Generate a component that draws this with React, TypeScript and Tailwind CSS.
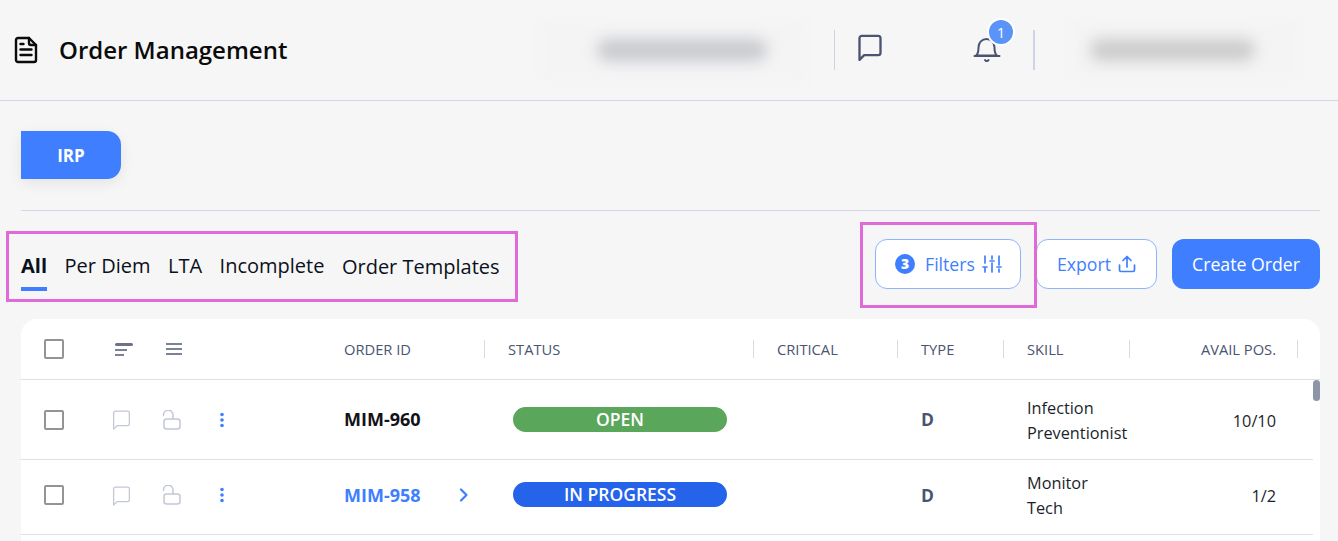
const gridCols = 'grid grid-cols-[464px_269px_144px_106px_126px_168px_22px]';

function DocIcon() {
  return (
    <svg width="24" height="28" viewBox="0 0 24 28" fill="none" stroke="#0b0b0b" strokeWidth="2.4" strokeLinejoin="round" strokeLinecap="round">
      <path d="M4 2h11L22 9v15a2 2 0 0 1-2 2H4a2 2 0 0 1-2-2V4a2 2 0 0 1 2-2Z" />
      <path d="M15 2v5a2 2 0 0 0 2 2h5" />
      <path d="M6.500 8h3M6.500 13.500h11M6.500 19h11" />
    </svg>
  );
}

function ChatIcon({ size, color, width }: { size: number; color: string; width: number }) {
  return (
    <svg width={size} height={size} viewBox="0 0 24 24" fill="none" stroke={color} strokeWidth={width} strokeLinejoin="round" strokeLinecap="round">
      <path d="M3 4.500A2 2 0 0 1 5 2.500h14a2 2 0 0 1 2 2V17a2 2 0 0 1-2 2H7l-4 4V4.500Z" />
    </svg>
  );
}

function BellIcon() {
  return (
    <svg width="28" height="30" viewBox="0 0 28 30" fill="none" stroke="#4a5472" strokeWidth="2" strokeLinecap="round" strokeLinejoin="round">
      <path d="M3 22.500c2-1.500 2.500-4 2.500-8 0-5 3.500-8.500 8-8.500s8 3.500 8 8.500c0 4 .5 6.500 2.500 8Z" />
      <path d="M1.500 23h25" />
      <path d="M12 27a2 2 0 0 0 3.500 0" />
    </svg>
  );
}

function SliderIcon() {
  return (
    <svg width="20" height="20" viewBox="0 0 20 20" fill="none" stroke="#3f7fff" strokeWidth="1.700" strokeLinecap="round">
      <path d="M3 2v7M3 13v5M10 2v3M10 9v9M17 2v9M17 15v3M1 13h4M8 7h4M15 13h4" />
    </svg>
  );
}

function UploadIcon() {
  return (
    <svg width="18" height="18" viewBox="0 0 18 18" fill="none" stroke="#3f7fff" strokeWidth="1.700" strokeLinecap="round" strokeLinejoin="round">
      <path d="M1.500 10v5a1.500 1.500 0 0 0 1.500 1.500h12a1.500 1.500 0 0 0 1.500-1.500v-5" />
      <path d="M9 12V1.500M5 5.500l4-4 4 4" />
    </svg>
  );
}

function LockIcon() {
  return (
    <svg width="20" height="20" viewBox="0 0 20 20" fill="none" stroke="#c3c8d6" strokeWidth="1.500" strokeLinecap="round" strokeLinejoin="round">
      <rect x="3" y="9" width="16" height="10" rx="2.500" />
      <path d="M2.500 5.500A3.500 3.500 0 0 1 12 4.500V9" />
    </svg>
  );
}

function DotsIcon() {
  return (
    <svg width="6" height="16" viewBox="0 0 6 16" fill="#3f7fff">
      <circle cx="3" cy="2.500" r="1.800" />
      <circle cx="3" cy="8" r="1.800" />
      <circle cx="3" cy="13.500" r="1.800" />
    </svg>
  );
}

function Checkbox() {
  return <span className="block h-5 w-5 rounded-[2px] border-2 border-[#949494] bg-white" />;
}

const orders = [
  { id: 'MIM-960', status: 'OPEN', pill: 'bg-[#5aa65b]', skill: ['Infection', 'Preventionist'], pos: '10/10', open: false, height: 'h-20', skillPad: 'pt-[3px]', posPad: 'pt-[3px]' },
  { id: 'MIM-958', status: 'IN PROGRESS', pill: '-mt-[2px] bg-[#2563eb]', skill: ['Monitor', 'Tech'], pos: '1/2', open: true, height: 'h-[75px] pb-[4px]', skillPad: 'pt-[2px]', posPad: 'pt-[2px]' },
];

const columns = [
  { label: 'STATUS', className: 'pl-[23px]' },
  { label: 'CRITICAL', className: 'pl-[23px]' },
  { label: 'TYPE', className: 'pl-[23px]' },
  { label: 'SKILL', className: 'pl-[23px]' },
  { label: 'AVAIL POS.', className: 'justify-end pr-[21px]' },
];

export default function App(): React.ReactElement {
  return (
    <div className="relative h-[541px] w-[1338px] overflow-hidden bg-[#f6f6f6] font-['Open_Sans',sans-serif]">
      <header className="flex h-[101px] items-center border-b border-[#d2d7ea]">
        <div className="ml-[14px] flex w-[520px] items-center gap-[21px]">
          <DocIcon />
          <h1 className="text-[24px] font-semibold leading-8 text-[#0b0b0b]">Order Management</h1>
        </div>
        <div className="ml-[6px] flex h-[60px] w-[266px] items-center justify-center bg-[#f4f4f5] blur-[5px]">
          <div className="ml-[18px] h-[22px] w-[170px] rounded-full bg-[#c8c9ce] blur-[6px]" />
        </div>
        <div className="ml-[28px] h-[40px] w-px bg-[#cfd3de]" />
        <div className="ml-[21px] -mt-[6px]">
          <ChatIcon size={28} color="#4a5472" width={2} />
        </div>
        <div className="relative ml-[89px] -mt-[4px]">
          <BellIcon />
          <span className="absolute -right-[14px] -top-[15px] flex h-7 w-7 items-center justify-center rounded-full border-2 border-white bg-[#5b94f8] text-[14px] text-white">
            1
          </span>
        </div>
        <div className="ml-[32px] h-[40px] w-[2px] bg-[#cfd3e6]" />
        <div className="ml-[34px] flex h-[60px] w-[230px] items-center justify-center bg-[#f4f4f4] blur-[5px]">
          <div className="mr-[24px] h-[22px] w-[165px] rounded-full bg-[#cbcbcb] blur-[6px]" />
        </div>
      </header>

      <div className="pl-[21px] pr-[18px]">
        <div className="pt-[30px] pb-[31px] border-b border-[#d2d7ea]">
          <button type="button" className="block h-12 w-[100px] rounded-r-[14px] bg-[#3f7fff] pt-[2px] text-[17px] font-bold text-white shadow-[0_4px_14px_rgba(0,0,0,0.08)]">
            IRP
          </button>
        </div>

        <div className="flex h-[108px] items-center justify-between">
          <nav className="flex items-start gap-[17.5px] pt-[2px] text-[20px] leading-7 text-[#0b1020]">
            <span className="relative font-bold">
              All
              <span className="absolute -bottom-[11px] left-0 h-1 w-full bg-[#3f7fff]" />
            </span>
            <span>Per Diem</span>
            <span>LTA</span>
            <span>Incomplete</span>
            <span className="pt-px">Order Templates</span>
          </nav>
          <div className="-mt-[3px] flex items-center text-[17.7px]">
            <button type="button" className="flex h-[50px] w-[146px] items-center rounded-xl border border-[#8fb4fb] bg-white pl-[19px] text-[#3f7fff]">
              <span className="mr-[10px] flex h-5 w-5 items-center justify-center rounded-full bg-[#3f7fff] text-[14px] font-extrabold text-white">3</span>
              <span className="mt-[2px]">Filters</span>
              <span className="ml-[7px]"><SliderIcon /></span>
            </button>
            <button type="button" className="ml-[15px] flex h-[50px] w-[121px] items-center justify-center gap-[7px] rounded-xl border border-[#8fb4fb] bg-white text-[#3f7fff]">
              <span className="mt-[2px]">Export</span>
              <UploadIcon />
            </button>
            <button type="button" className="ml-[15px] flex h-[50px] w-[148px] items-center justify-center rounded-xl bg-[#3f7fff] pt-[2px] text-white">
              Create Order
            </button>
          </div>
        </div>

        <section className="relative h-[300px] rounded-t-2xl bg-white">
          <div className={`${gridCols} h-[61px] items-center border-b border-[#e0e0e0] text-[14.7px] font-normal text-[#4a5472]`}>
            <div className="flex h-[18px] items-center border-r border-[#d8dce6]">
              <span className="ml-[23px] w-[71px]"><Checkbox /></span>
              <span className="flex w-[51px] flex-col gap-[3px]">
                <span className="h-[3px] w-[18px] rounded-sm bg-[#6b7288]" />
                <span className="h-[2px] w-[12px] bg-[#7c8296]" />
                <span className="h-[2px] w-[9px] bg-[#7c8296]" />
              </span>
              <span className="flex w-[178px] flex-col gap-[3px]">
                <span className="h-[2px] w-[16px] bg-[#7c8296]" />
                <span className="h-[2px] w-[16px] bg-[#7c8296]" />
                <span className="h-[2px] w-[16px] bg-[#7c8296]" />
              </span>
              <span>ORDER ID</span>
            </div>
            {columns.map((column) => (
              <div key={column.label} className={`flex h-[18px] items-center border-r border-[#d8dce6] ${column.className}`}>
                {column.label}
              </div>
            ))}
          </div>

          {orders.map((order) => (
            <div key={order.id} className={`${gridCols} ${order.height} mr-[7px] items-center border-b border-[#e0e0e0] text-[16.3px] text-[#1b1f2b]`}>
              <div className="flex items-center">
                <span className="ml-[23px] w-[67px]"><Checkbox /></span>
                <span className="w-[50px]"><ChatIcon size={21} color="#c3c8d6" width={1.5} /></span>
                <span className="w-[58px]"><LockIcon /></span>
                <span className="w-[125px]"><DotsIcon /></span>
                <span className={`text-[18px] font-bold ${order.open ? 'text-[#3f7fff]' : 'text-[#111318]'}`}>{order.id}</span>
                {order.open && (
                  <svg className="ml-[36px]" width="14" height="16" viewBox="0 0 14 16" fill="none" stroke="#3f7fff" strokeWidth="2.200" strokeLinecap="round" strokeLinejoin="round">
                    <path d="M4 2.500l5.500 5.500-5.500 5.500" />
                  </svg>
                )}
              </div>
              <div className="pl-[28px]">
                <div className={`flex h-[25px] w-[214px] items-center justify-center rounded-full text-[17.5px] font-semibold text-white ${order.pill}`}>
                  {order.status}
                </div>
              </div>
              <div />
              <div className="pl-[23px] text-[17.5px] font-bold text-[#4a5472]">D</div>
              <div className={`pl-[23px] leading-[25px] ${order.skillPad}`}>
                {order.skill.map((line) => (
                  <div key={line}>{line}</div>
                ))}
              </div>
              <div className={`pr-[22px] text-right ${order.posPad}`}>{order.pos}</div>
              <div />
            </div>
          ))}

          <div className="absolute right-0 top-[61px] h-[21px] w-[7px] rounded-full bg-[#8f95a8]" />
        </section>
      </div>

      <div className="absolute left-[6px] top-[231px] h-[71px] w-[512px] border-[3px] border-[#e06bd8]" />
      <div className="absolute left-[860px] top-[222px] h-[86px] w-[177px] border-[3px] border-[#e06bd8]" />
    </div>
  );
}
